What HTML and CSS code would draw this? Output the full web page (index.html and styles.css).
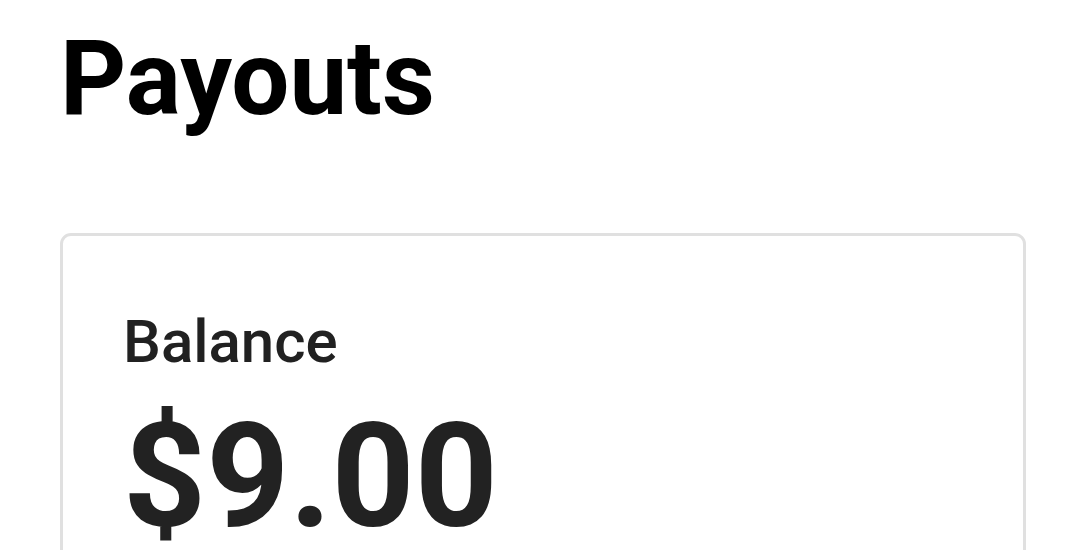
FILE: index.html
```html
<!DOCTYPE html>
<html>
<head>
<meta charset="utf-8">
<link rel="stylesheet" href="styles.css">
</head>
<body>
<main class="page">
  <h1 class="title">Payouts</h1>
  <section class="card">
    <div class="label">Balance</div>
    <div class="amount">$9.00</div>
  </section>
</main>
</body>
</html>
```

FILE: styles.css
```css
html, body {
  margin: 0;
  padding: 0;
  background: #ffffff;
}
body {
  font-family: Roboto, "Liberation Sans", Arial, sans-serif;
  overflow: hidden;
  height: 550px;
}
.page {
  padding: 29px 54px 0 60px;
}
.title {
  margin: 0;
  font-size: 103px;
  line-height: 100px;
  font-weight: 700;
  color: #000000;
  letter-spacing: 0;
}
.card {
  margin-top: 104px;
  border: 3px solid #e0e0e0;
  border-radius: 11px;
  padding: 76px 60px 0 60px;
  height: 600px;
  box-sizing: border-box;
}
.label {
  font-size: 60px;
  line-height: 60px;
  font-weight: 500;
  color: #212121;
}
.amount {
  margin-top: 31px;
  font-size: 145px;
  line-height: 146px;
  font-weight: 700;
  color: #222222;
}
```
